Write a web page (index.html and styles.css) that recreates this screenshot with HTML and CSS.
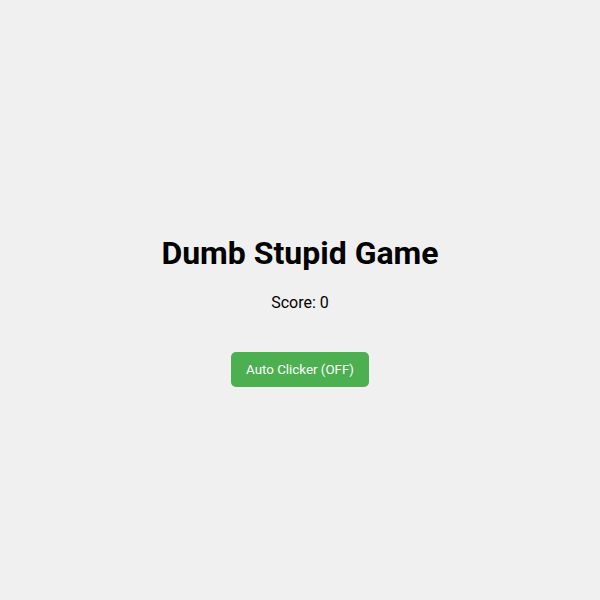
FILE: index.html
```html
<!DOCTYPE html>
<html>
<head>
<meta charset="utf-8">
<link rel="stylesheet" href="styles.css">
</head>
<body>
<div class="game">
  <h1 class="title">Dumb Stupid Game</h1>
  <p class="score">Score: 0</p>
  <button class="auto">Auto Clicker (OFF)</button>
</div>
</body>
</html>
```
FILE: styles.css
```css
html, body {
  margin: 0;
  height: 100%;
}
body {
  background: #f0f0f0;
  font-family: Roboto, "Liberation Sans", sans-serif;
  display: flex;
  align-items: center;
  justify-content: center;
}
.game {
  display: flex;
  flex-direction: column;
  align-items: center;
  text-align: center;
  padding-top: 21px;
}
.title {
  font-size: 32px;
  font-weight: bold;
  margin: 0 0 21px;
  color: #000;
}
.score {
  font-size: 16px;
  margin: 0 0 40px;
  color: #000;
}
.auto {
  background: #4caf50;
  color: #fff;
  border: none;
  border-radius: 5px;
  font-family: Roboto, "Liberation Sans", sans-serif;
  font-size: 13.33px;
  padding: 0 15px;
  height: 35px;
}
```
